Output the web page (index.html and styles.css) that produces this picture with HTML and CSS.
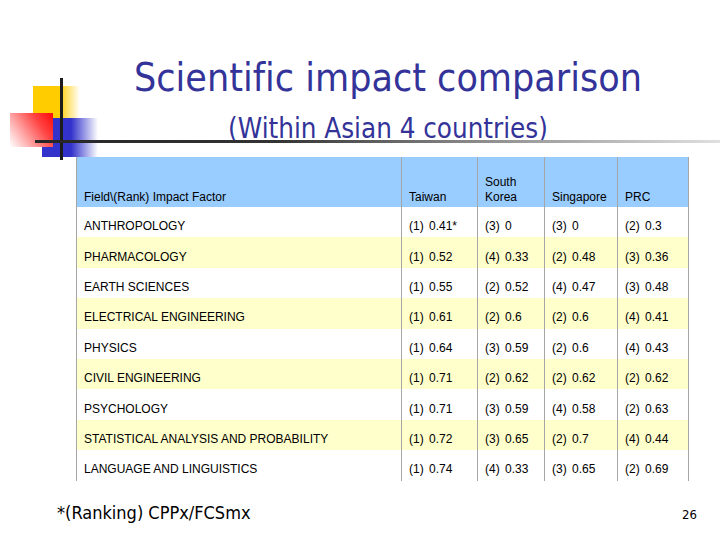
FILE: index.html
```html
<!DOCTYPE html>
<html>
<head>
<meta charset="utf-8">
<title>Scientific impact comparison</title>
<link rel="stylesheet" href="styles.css">
</head>
<body>
<div class="slide">
  <div class="logo" aria-hidden="true">
    <div class="sq sq-yellow"></div>
    <div class="sq sq-blue"></div>
    <div class="sq sq-red"></div>
    <div class="sq vline"></div>
  </div>
  <header class="head">
    <h1 class="title">Scientific impact comparison</h1>
    <p class="subtitle">(Within Asian 4 countries)</p>
  </header>
  <div class="rule"></div>
  <table class="grid">
    <colgroup>
      <col class="c-field">
      <col class="c-tw">
      <col class="c-kr">
      <col class="c-sg">
      <col class="c-prc">
    </colgroup>
    <thead>
      <tr>
        <th>Field\(Rank) Impact Factor</th>
        <th>Taiwan</th>
        <th>South<br>Korea</th>
        <th>Singapore</th>
        <th>PRC</th>
      </tr>
    </thead>
    <tbody>
      <tr><td>ANTHROPOLOGY</td><td>(1) 0.41*</td><td>(3) 0</td><td>(3) 0</td><td>(2) 0.3</td></tr>
      <tr><td>PHARMACOLOGY</td><td>(1) 0.52</td><td>(4) 0.33</td><td>(2) 0.48</td><td>(3) 0.36</td></tr>
      <tr><td>EARTH SCIENCES</td><td>(1) 0.55</td><td>(2) 0.52</td><td>(4) 0.47</td><td>(3) 0.48</td></tr>
      <tr><td>ELECTRICAL ENGINEERING</td><td>(1) 0.61</td><td>(2) 0.6</td><td>(2) 0.6</td><td>(4) 0.41</td></tr>
      <tr><td>PHYSICS</td><td>(1) 0.64</td><td>(3) 0.59</td><td>(2) 0.6</td><td>(4) 0.43</td></tr>
      <tr><td>CIVIL ENGINEERING</td><td>(1) 0.71</td><td>(2) 0.62</td><td>(2) 0.62</td><td>(2) 0.62</td></tr>
      <tr><td>PSYCHOLOGY</td><td>(1) 0.71</td><td>(3) 0.59</td><td>(4) 0.58</td><td>(2) 0.63</td></tr>
      <tr><td>STATISTICAL ANALYSIS AND PROBABILITY</td><td>(1) 0.72</td><td>(3) 0.65</td><td>(2) 0.7</td><td>(4) 0.44</td></tr>
      <tr><td>LANGUAGE AND LINGUISTICS</td><td>(1) 0.74</td><td>(4) 0.33</td><td>(3) 0.65</td><td>(2) 0.69</td></tr>
    </tbody>
  </table>
  <footer class="foot">
    <span class="note">*(Ranking) CPPx/FCSmx</span>
    <span class="page">26</span>
  </footer>
</div>
</body>
</html>
```

FILE: styles.css
```css
* { box-sizing: border-box; }

body {
  margin: 0;
  background: #ffffff;
}

.slide {
  position: relative;
  width: 720px;
  height: 540px;
  overflow: hidden;
  padding-top: 56px;
  background: #ffffff;
  font-family: "DejaVu Sans Condensed", "DejaVu Sans", sans-serif;
  font-stretch: condensed;
  font-variant-ligatures: none;
}

/* decorative corner logo */
.logo {
  position: absolute;
  left: 0;
  top: 0;
  width: 100px;
  height: 170px;
}

.sq { position: absolute; }

.sq-yellow {
  left: 33px;
  top: 86px;
  width: 47px;
  height: 32px;
  background: linear-gradient(to right, #ffcc00 0%, #ffcc00 55%, #ffffff 100%);
}

.sq-blue {
  left: 42px;
  top: 118px;
  width: 56px;
  height: 39px;
  background: linear-gradient(to right, #3333cc 0%, #3333cc 52%, #ffffff 100%);
}

.sq-red {
  left: 10px;
  top: 113px;
  width: 43px;
  height: 34px;
  background: linear-gradient(235deg, #ff0a0a 0%, #ff4040 30%, #ffb0b0 70%, #ffffff 100%);
}

.vline {
  left: 60px;
  top: 78px;
  width: 3px;
  height: 82px;
  background: #1c1c1c;
}

/* title */
.head {
  margin-left: 56px;
  text-align: center;
  color: #333399;
}

.title {
  margin: 0;
  font-size: 39px;
  line-height: 44px;
  font-weight: normal;
}

.subtitle {
  margin: 16px 0 0;
  font-size: 27.5px;
  line-height: 24px;
}

.rule {
  position: relative;
  z-index: 1;
  margin-left: 35px;
  height: 3px;
  background: linear-gradient(to right, #262626 0%, #333333 35%, #8c8c8c 65%, #e0e0e0 100%);
}

/* table */
.grid {
  margin: 14px 0 0 76px;
  width: 612px;
  table-layout: fixed;
  border-collapse: collapse;
  font-family: "Liberation Sans", Arial, sans-serif;
  font-size: 12px;
  color: #000000;
}

.c-field { width: 325px; }
.c-tw { width: 76px; }
.c-kr { width: 67px; }
.c-sg { width: 73px; }
.c-prc { width: 71px; }

.grid th,
.grid td {
  border-left: 1px solid #a6a6a6;
  border-right: 1px solid #a6a6a6;
  padding: 0 7px;
  text-align: left;
  font-weight: normal;
  white-space: nowrap;
}

.grid thead th {
  background: #99ccff;
  height: 50px;
  vertical-align: bottom;
  padding-bottom: 2px;
  line-height: 15px;
}

.grid tbody td {
  height: 30.4px;
  padding-top: 8px;
  vertical-align: middle;
  background: #ffffff;
  word-spacing: 2px;
}

.grid tbody td:first-child { word-spacing: 0; }

.grid tbody tr:nth-child(even) td {
  background: #ffffcc;
}

/* footer */
.foot {
  display: flex;
  justify-content: space-between;
  align-items: baseline;
  margin-top: 21px;
  padding: 0 23px 0 57px;
  color: #000000;
}

.note {
  font-size: 18px;
  line-height: 22px;
}

.page {
  font-size: 13px;
}
```
